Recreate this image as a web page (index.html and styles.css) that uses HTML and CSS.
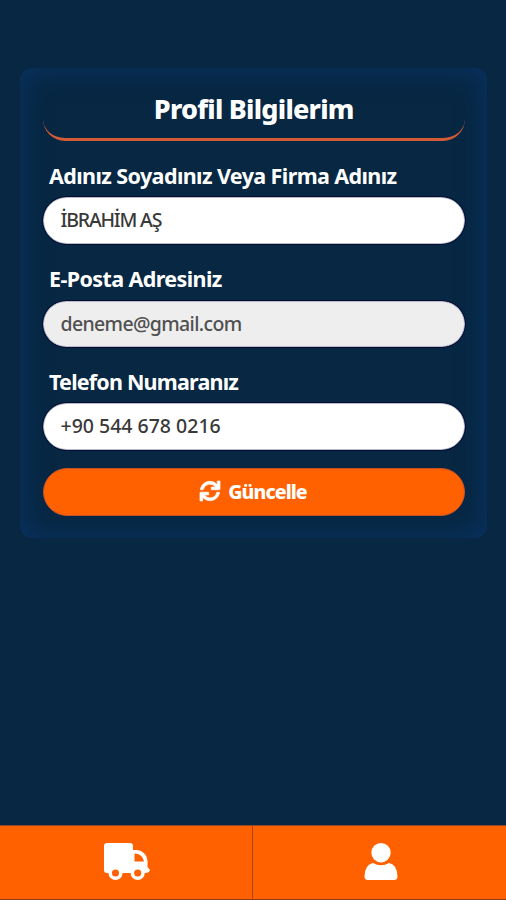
FILE: index.html
```html
<!DOCTYPE html>
<html lang="tr">
<head>
<meta charset="utf-8">
<title>Profil Bilgilerim</title>
<link rel="stylesheet" href="styles.css">
</head>
<body>
<main>
  <form class="card">
    <h1><span>Profil Bilgilerim</span></h1>
    <label class="label-name" for="name">Adınız Soyadınız Veya Firma Adınız</label>
    <input class="input-name" id="name" type="text" value="İBRAHİM AŞ">
    <label class="label-mail" for="mail">E-Posta Adresiniz</label>
    <input class="input-mail" id="mail" type="text" value="deneme@gmail.com" readonly>
    <label class="label-phone" for="phone">Telefon Numaranız</label>
    <input class="input-phone" id="phone" type="text" value="+90 544 678 0216">
    <button type="button">
      <svg class="sync" viewBox="0 0 512 512"><path d="M440.65 12.57l4 82.77A247.16 247.16 0 0 0 255.83 8C134.73 8 33.91 94.92 12.29 209.82A12 12 0 0 0 24.09 224h49.05a12 12 0 0 0 11.67-9.26 175.91 175.91 0 0 1 317-56.94l-101.46-4.86a12 12 0 0 0-12.57 12v47.41a12 12 0 0 0 12 12H500a12 12 0 0 0 12-12V12a12 12 0 0 0-12-12h-47.37a12 12 0 0 0-11.98 12.57zM255.83 432a175.61 175.61 0 0 1-146-77.8l101.8 4.87a12 12 0 0 0 12.57-12v-47.4a12 12 0 0 0-12-12H12a12 12 0 0 0-12 12V500a12 12 0 0 0 12 12h47.35a12 12 0 0 0 12-12.6l-4.15-82.57A247.17 247.17 0 0 0 255.83 504c121.11 0 221.93-86.92 243.55-201.82a12 12 0 0 0-11.8-14.18h-49.05a12 12 0 0 0-11.67 9.26A175.86 175.86 0 0 1 255.83 432z"/></svg>
      <span>Güncelle</span>
    </button>
  </form>
</main>
<nav>
  <a href="#" aria-label="Nakliye">
    <svg class="truck" viewBox="0 0 46 38"><path fill-rule="evenodd" d="M3 0H26Q29 0 29 3V7H32C38 7 43 11 43.500 18V24L46 27Q45 30 41.500 30H3Q0 30 0 27V3Q0 0 3 0ZM30.500 10.500V18.500H40C39 13.500 35.500 10.500 30.500 10.500Z"/><g class="wheel"><circle cx="11.500" cy="30" r="5.300"/><circle cx="33.700" cy="30" r="5.300"/></g></svg>
  </a>
  <a href="#" aria-label="Profil">
    <svg class="user" viewBox="0 0 34 38"><circle cx="17" cy="9.700" r="9.700"/><path d="M9 20Q17 24.500 25 20Q33.500 22 33.500 33.500Q33.500 37 30 37H4Q.5 37 .5 33.500Q.5 22 9 20Z"/></svg>
  </a>
</nav>
</body>
</html>
```
FILE: styles.css
```css
* { box-sizing: border-box; }
body {
  margin: 0;
  height: 900px;
  display: flex;
  flex-direction: column;
  background: #072742;
  color: #fff;
  font-family: "Noto Sans", "Open Sans", sans-serif;
}
main { flex: 1; padding: 68px 19px 0 20px; }
.card {
  height: 470px;
  padding: 10px 22px 0 22.500px;
  display: flex;
  flex-direction: column;
  border-radius: 12px;
  box-shadow: inset 0 0 28px 3px #093261;
}
h1 {
  height: 63px;
  margin: 0 0 20px;
  padding-top: 13px;
  border-bottom: 3px solid #d35b35;
  border-radius: 0 0 22px 22px;
  font-size: 27px;
  line-height: 36px;
  font-weight: 800;
  text-align: center;
  letter-spacing: -.75px;
}
label {
  height: 30px;
  margin-left: 6.500px;
  font-size: 21.500px;
  line-height: 30px;
  font-weight: 700;
  white-space: nowrap;
}
.label-name { letter-spacing: -.6px; }
.label-mail { letter-spacing: -.6px; }
.label-phone { letter-spacing: -.8px; }
input {
  width: 422px;
  height: 47px;
  margin: 6px 0 20px;
  padding: 0 17px 2px;
  border: 1px solid #b9bacb;
  border-radius: 24px;
  background: #fff;
  color: #393939;
  font: 500 19.500px "Noto Sans", "Open Sans", sans-serif;
  outline: 1px solid #050d35;
}
.input-name { letter-spacing: -1.2px; }
.input-mail { margin-top: 7px; height: 46px; background: #eee; color: #505050; letter-spacing: -.65px; }
.input-phone { margin-bottom: 18px; }
button {
  width: 422px;
  height: 48px;
  display: flex;
  align-items: center;
  justify-content: center;
  gap: 8px;
  padding: 0 0 2px;
  border: 1px solid #c55327;
  border-radius: 24px;
  background: #ff6000;
  color: #fff;
  font: 800 19.500px "Noto Sans", "Open Sans", sans-serif;
  letter-spacing: -.95px;
}
svg { fill: #fff; }
.sync { width: 20px; height: 20px; stroke: #fff; stroke-width: 18; overflow: visible; }
nav {
  height: 75px;
  display: grid;
  grid-template-columns: 253px 253px;
  background: #ff6000;
  border-top: 1px solid #8f4a2c;
  border-bottom: 1px solid #8f3d18;
}
nav a { display: flex; justify-content: center; align-items: center; padding: 0 0 2px 2px; }
nav a:first-child { border-right: 1px solid #a64719; }
.truck { width: 46px; height: 38px; }
.user { width: 34px; height: 38px; }
.wheel { stroke: #fff; stroke-width: 3.500px; fill: #ff6000; }
```
